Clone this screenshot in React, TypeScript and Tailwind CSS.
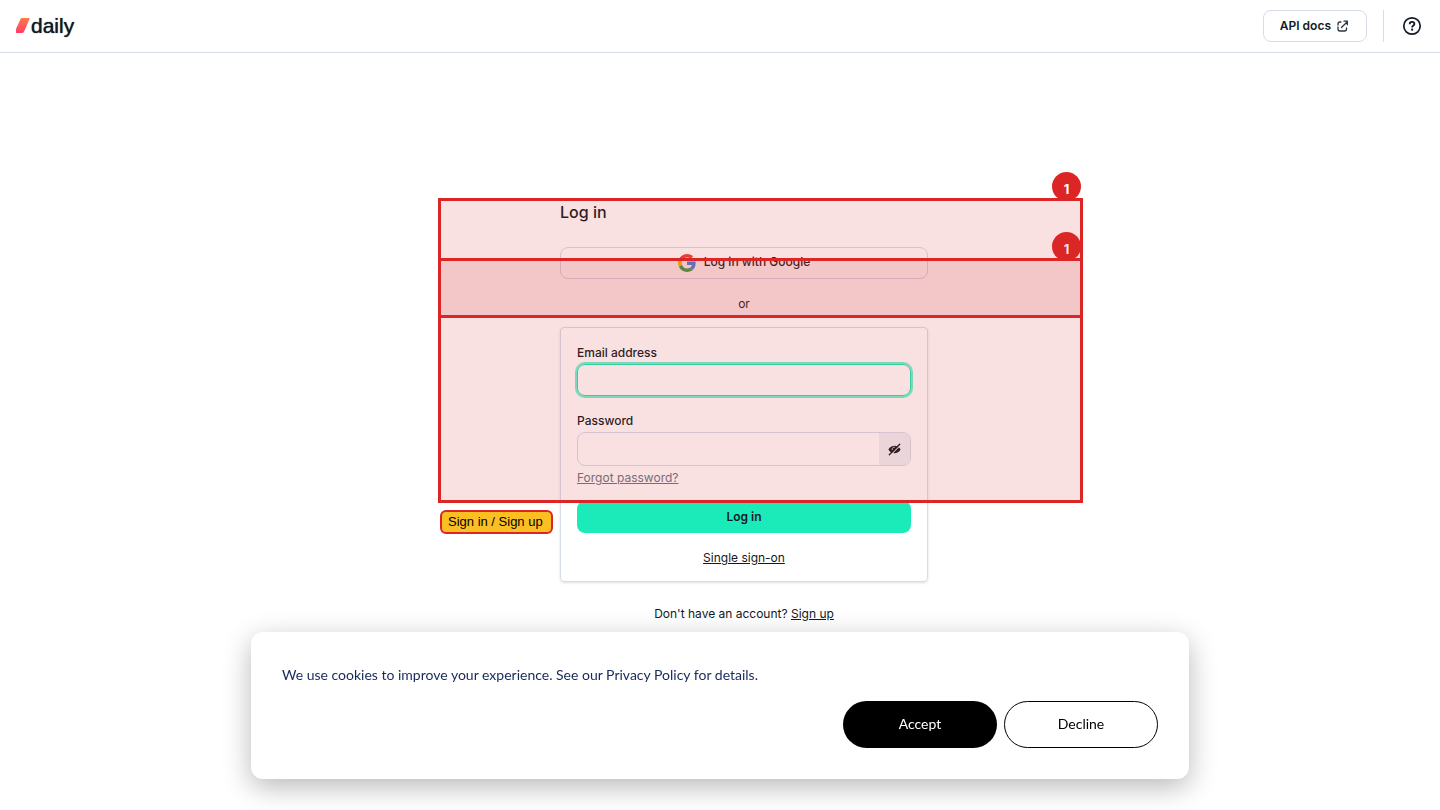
import React from "react";

function DailyLogo() {
  return (
    <a href="#home" aria-label="daily" className="flex items-center gap-px">
      <svg width="14" height="16" viewBox="0 0 14 16" aria-hidden="true">
        <defs>
          <linearGradient id="mark" x1="0" y1="0" x2="0" y2="1">
            <stop offset="0" stopColor="#ff7a45" />
            <stop offset="1" stopColor="#ff3f6b" />
          </linearGradient>
        </defs>
        <path d="M6.200 0H12.600a.9.9 0 0 1 .8 1.300L8 13.700A2.400 2.400 0 0 1 5.900 15H.6a.6.6 0 0 1-.6-.6V11L4.400 1.200A2 2 0 0 1 6.200 0Z" fill="url(#mark)" />
      </svg>
      <span className="font-['Liberation_Sans',sans-serif] text-[21px] leading-6 text-[#121a24] [text-shadow:0_0_1px_#121a24]">daily</span>
    </a>
  );
}

function OpenIcon() {
  return (
    <svg width="11" height="12" viewBox="0 0 11 12" fill="none" stroke="#2b3540" strokeWidth="1.300" strokeLinecap="round" aria-hidden="true">
      <path d="M4 2H3A2 2 0 0 0 1 4V5M1 7V9A2 2 0 0 0 3 11H7.500A2 2 0 0 0 9.500 9V8M4.500 7.500L10 2M7 1.200H10.300V4.800" />
    </svg>
  );
}

function HelpIcon() {
  return (
    <svg width="20" height="20" viewBox="0 0 20 20" fill="none" stroke="#121a24" strokeWidth="1.700" aria-hidden="true">
      <circle cx="10" cy="10" r="8.200" />
      <path strokeWidth="1.800" d="M7.700 8.200C7.700 6.700 8.700 5.900 10.100 5.900S12.400 6.700 12.400 7.900C12.400 9.500 10.100 9.500 10.100 11.400" />
      <circle cx="10.100" cy="13.700" r="1.100" fill="#121a24" stroke="none" />
    </svg>
  );
}

function GoogleIcon() {
  return (
    <svg width="18" height="18" viewBox="0 0 48 48" aria-hidden="true">
      <path fill="#EA4335" d="M24 9.500c3.540 0 6.710 1.220 9.210 3.600l6.850-6.850C35.900 2.380 30.470 0 24 0 14.620 0 6.510 5.380 2.560 13.220l7.980 6.190C12.430 13.720 17.740 9.500 24 9.500z" />
      <path fill="#4285F4" d="M46.980 24.550c0-1.570-.15-3.090-.38-4.550H24v9.020h12.940c-.58 2.960-2.260 5.480-4.780 7.180l7.730 6c4.510-4.180 7.090-10.360 7.090-17.650z" />
      <path fill="#FBBC05" d="M10.530 28.590c-.48-1.450-.76-2.990-.76-4.590s.27-3.140.76-4.590l-7.980-6.190C.92 16.460 0 20.120 0 24c0 3.880.92 7.540 2.560 10.780l7.970-6.190z" />
      <path fill="#34A853" d="M24 48c6.480 0 11.930-2.130 15.890-5.810l-7.730-6c-2.150 1.450-4.920 2.300-8.160 2.300-6.260 0-11.570-4.220-13.470-9.910l-7.980 6.190C6.510 42.620 14.620 48 24 48z" />
    </svg>
  );
}

function EyeOffIcon() {
  return (
    <svg width="13" height="13" viewBox="0 0 16 16" aria-hidden="true">
      <path d="M.5 8C2.300 4.800 5 3.400 8 3.400S13.700 4.800 15.500 8C13.700 11.200 11 12.600 8 12.600S2.300 11.200.5 8Z" fill="#121a24" />
      <path d="M5.100 8.600A2.900 2.900 0 0 1 8.600 5.100" fill="none" stroke="#eff2f6" strokeWidth="1" />
      <path d="M3 14.800L15.500 2.300" stroke="#eff2f6" strokeWidth="1.300" />
      <path d="M1.600 14.400L14.400 1.600" stroke="#121a24" strokeWidth="1.600" strokeLinecap="round" />
    </svg>
  );
}

function Region({ className }: { className: string }) {
  return (
    <div className={`pointer-events-none absolute -left-[122px] w-[645px] border-[3px] border-[#dc2626] bg-[#d62828]/14 bg-clip-padding ${className}`} />
  );
}

function Badge({ className }: { className: string }) {
  return (
    <span className={`pointer-events-none absolute left-[492px] flex size-[29px] items-center justify-center rounded-full bg-[#dc2626] pt-1 text-[13px] leading-4 font-bold text-white ${className}`}>
      1
    </span>
  );
}

export default function App() {
  return (
    <div className="min-h-screen bg-white font-['Inter',sans-serif] text-[12px] leading-4 text-[#121a24]">
      <header className="flex h-[53px] items-center justify-between border-b border-[#d6dce8] px-4">
        <DailyLogo />
        <div className="flex items-center gap-4">
          <a href="#docs" className="flex h-8 items-center gap-1.5 rounded-lg border border-[#d6dce8] pr-[18px] pl-4 font-semibold">
            API docs
            <OpenIcon />
          </a>
          <span className="h-8 w-px bg-[#d6dce8]" />
          <button type="button" aria-label="Help" className="px-0.5">
            <HelpIcon />
          </button>
        </div>
      </header>

      <main className="flex justify-center pt-[147px] pl-12">
        <div className="relative w-[368px]">
          <h1 className="text-[16px] leading-6 font-medium">Log in</h1>
          <button type="button" className="mt-[23px] flex h-8 w-full items-center justify-center gap-2 rounded-lg border border-[#d6dce8] font-medium">
            <GoogleIcon />
            <span className="pb-0.5">Log in with Google</span>
          </button>
          <p className="mt-4 text-center leading-[18px]">or</p>

          <form className="mt-[14px] rounded-sm border border-[#d6dce8] px-4 pt-[17px] pb-[15px] shadow-sm" onSubmit={(e) => e.preventDefault()}>
            <label htmlFor="email" className="block font-medium">Email address</label>
            <input id="email" type="email" className="mt-[3px] block h-8 w-full rounded-lg border border-[#1bebb9] px-3 ring-2 ring-[#6df3d2] outline-none" />
            <label htmlFor="password" className="mt-[17px] block font-medium">Password</label>
            <div className="mt-[3px] flex h-[34px] overflow-hidden rounded-lg border border-[#d6dce8]">
              <input id="password" type="password" className="min-w-0 flex-1 px-3 outline-none" />
              <button type="button" aria-label="Show password" className="flex w-[31px] items-center justify-center bg-[#eff2f6]">
                <EyeOffIcon />
              </button>
            </div>
            <a href="#forgot" className="mt-1 inline-block text-[#6b7785] underline underline-offset-1">Forgot password?</a>
            <button type="submit" className="mt-[15px] block h-8 w-full rounded-lg bg-[#1bebb9] font-semibold">Log in</button>
            <p className="mt-[17px] text-center">
              <a href="#sso" className="underline underline-offset-1">Single sign-on</a>
            </p>
          </form>

          <p className="mt-6 text-center">
            Don't have an account? <a href="#signup" className="underline underline-offset-1">Sign up</a>
          </p>

          <Badge className="-top-7" />
          <Badge className="top-8" />
          <Region className="-top-0.5 h-[120px]" />
          <Region className="top-[58px] h-[245px]" />
          <span className="absolute top-[310px] -left-[120px] rounded-md border-2 border-[#dc2626] bg-[#fbbf24] py-0.5 pr-2 pl-1.5 font-['Liberation_Sans',sans-serif] text-[13px] leading-4 whitespace-nowrap text-black">
            Sign in / Sign up
          </span>
        </div>
      </main>

      <section aria-label="Cookies" className="fixed inset-x-0 bottom-[31px] mx-auto w-[938px] max-w-full rounded-xl bg-white px-[31px] pt-[33px] pb-[31px] font-['Lato',sans-serif] text-[14px] shadow-[0_8px_28px_rgba(0,0,0,0.28)]">
        <p className="leading-5 text-[#17295c]">We use cookies to improve your experience. See our Privacy Policy for details.</p>
        <div className="mt-4 flex justify-end gap-[7px]">
          <button type="button" className="h-[47px] w-[154px] rounded-full bg-black pb-0.5 text-white">Accept</button>
          <button type="button" className="h-[47px] w-[154px] rounded-full border border-black pb-0.5 text-black">Decline</button>
        </div>
      </section>
    </div>
  );
}
